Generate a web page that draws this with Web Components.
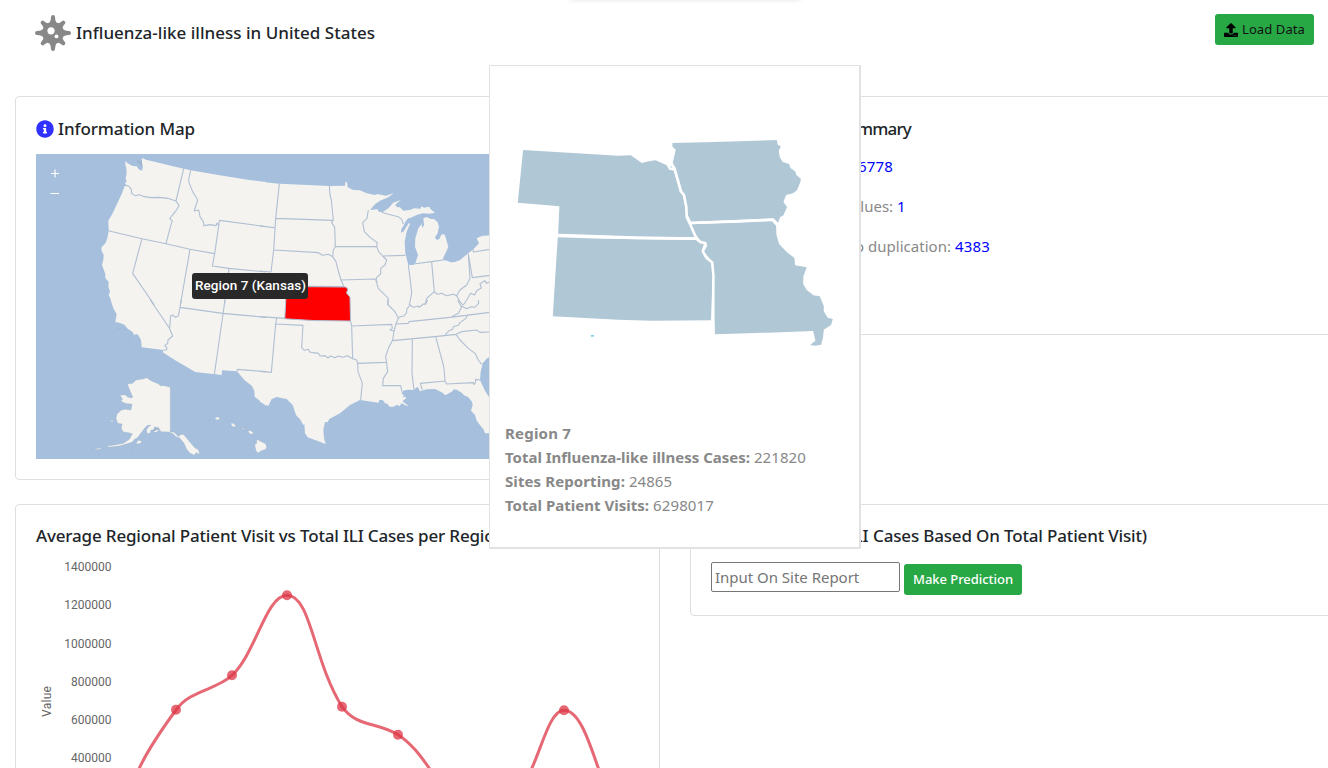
<!DOCTYPE html>
<html lang="en">
<head>
<meta charset="utf-8">
<title>Influenza-like illness in United States</title>
<style>
html,body{margin:0;height:768px;overflow:hidden;background:#fff}
body{font-family:"Noto Sans","Open Sans",sans-serif;font-size:15px;line-height:24px;color:#888;position:relative}
</style>
</head>
<body>
<ili-dashboard></ili-dashboard>
<script>
function define(name, html, setup) {
  const tpl = document.createElement('template');
  tpl.innerHTML = html.trim();
  customElements.define(name, class extends HTMLElement {
    constructor() {
      super();
      this.attachShadow({ mode: 'open' }).append(tpl.content.cloneNode(true));
    }
    connectedCallback() { if (setup) setup(this); }
  });
}

// Text run with tracking adjusted to the width given in "w".
define('fit-text', `<style>:host{display:inline-block;white-space:pre}</style><slot></slot>`, el => {
  const w = parseFloat(el.getAttribute('w'));
  if (!w) return;
  const n = el.textContent.length;
  el.style.letterSpacing = ((w - el.getBoundingClientRect().width) / n) + 'px';
});

define('virus-icon', `
<style>:host{display:block;width:36px;height:36px}svg{display:block}</style>
<svg width="36" height="36" viewBox="-18 -18 36 36" fill="#888">
<defs><path id="s" d="M-5.5-8Q-2.2-10.5-2-16A2 2 0 0 1 2-16Q2.2-10.5 5.5-8Z"/></defs>
<circle r="10.9"/>
<use href="#s"/><use href="#s" transform="rotate(45) scale(1 .92)"/><use href="#s" transform="rotate(90)"/><use href="#s" transform="rotate(135) scale(1 .92)"/>
<use href="#s" transform="rotate(180)"/><use href="#s" transform="rotate(225) scale(1 .92)"/><use href="#s" transform="rotate(270)"/><use href="#s" transform="rotate(315) scale(1 .92)"/>
<circle cx="-2" cy="-2.200" r="3.600" fill="#fff"/><circle cx="3.500" cy="3.400" r="1.900" fill="#fff"/>
</svg>`);

define('info-icon', `
<style>:host{display:block;width:18px;height:18px}svg{display:block}</style>
<svg width="18" height="18" viewBox="0 0 512 512"><path fill="#3030ff" d="M256 8C119 8 8 119 8 256s111 248 248 248 248-111 248-248S393 8 256 8zm0 110c23.200 0 42 18.800 42 42s-18.800 42-42 42-42-18.800-42-42 18.800-42 42-42zm56 254c0 6.600-5.400 12-12 12h-88c-6.600 0-12-5.400-12-12v-24c0-6.600 5.400-12 12-12h12v-64h-12c-6.600 0-12-5.400-12-12v-24c0-6.600 5.400-12 12-12h64c6.600 0 12 5.400 12 12v100h12c6.600 0 12 5.400 12 12v24z"/></svg>`);

define('upload-icon', `
<style>:host{display:block;width:14px;height:14px}svg{display:block}</style>
<svg width="14" height="14" viewBox="0 0 512 512"><path d="M296 384h-80c-13.300 0-24-10.700-24-24V192h-87.700c-17.800 0-26.700-21.500-14.100-34.100L242.300 5.700c7.500-7.500 19.800-7.500 27.300 0l152.200 152.200c12.600 12.600 3.700 34.100-14.100 34.100H320v168c0 13.300-10.700 24-24 24zm216-8v112c0 13.300-10.700 24-24 24H24c-13.300 0-24-10.700-24-24V376c0-13.300 10.700-24 24-24h136v8c0 30.900 25.100 56 56 56h80c30.900 0 56-25.100 56-56v-8h136c13.300 0 24 10.700 24 24zm-124 88c0-11-9-20-20-20s-20 9-20 20 9 20 20 20 20-9 20-20zm64 0c0-11-9-20-20-20s-20 9-20 20 9 20 20 20 20-9 20-20z"/></svg>`);

define('ui-button', `
<style>
:host{display:block}
button{box-sizing:border-box;height:31px;padding:0 9px;border:0;border-radius:3px;background:#28a745;display:flex;align-items:center;gap:4px;font:13px/21px "Noto Sans",sans-serif;font-weight:inherit;color:inherit}
</style><button><slot></slot></button>`);

define('ui-card', `
<style>
:host{display:block;box-sizing:border-box;border:1px solid #dfdfdf;border-radius:4px;background:#fff;padding:19px 20px}
.t{display:flex;align-items:center;gap:4px;height:24px;font-size:17px;font-weight:500;color:#212529}
</style><div class="t"><slot name="title"></slot></div><slot></slot>`);

define('us-map', `
<style>
:host{display:block;position:relative;height:305px;overflow:hidden;background:#a5bfdd}
svg{display:block}
.ctl{position:absolute;left:14px;top:14px;width:10px}
.tip{position:absolute;left:156px;top:119px;width:116px;height:26px;box-sizing:border-box;padding-left:3px;border-radius:3px;background:#292929;color:#fff;font:500 13.5px/25px Roboto,sans-serif}
.land path{fill:#f4f3f0}
.line path{fill:none;stroke:#b0bfd2;stroke-width:3.3;stroke-linejoin:round}
.isle path{fill:#f4f3f0;stroke:#9cacc2;stroke-width:1}
</style>
<svg width="604" height="305" viewBox="36 154 604 305">
<g class="land">
<g transform="translate(36 150) scale(.33333)"><path d="M318 24L330 29 443 56 464 61 560 77 640 90 690 96V465H229L225 450 218 435 222 425 217 410 218 395 208 385 208 372 198 345 202 330 203 315 196 300 197 292 208 280 214 265 218 242 217 212 230 190 244 160 258 130 266 108 272 105 266 100 272 95 269 85 272 70 271 55 268 45 268 33 275 40 290 48 302 49 308 58 318 62 321 50 316 38Z"/></g>
<g transform="translate(260 150) scale(.33333)"><path d="M0 95L58 101 208 108 255 107 256 96 261 97 263 112 280 120 300 121 320 130 345 135 352 132 378 137 402 129 385 142 360 152 345 163 330 180 352 178 356 185 368 186 385 175 400 158 422 150 405 165 412 172 420 172 430 182 450 180 462 175 482 176 484 169 492 173 508 170 512 178 525 188 508 191 488 190 470 195 452 203 445 205 438 212 430 228 424 238 423 248 430 245 447 218 450 222 440 245 434 275 436 310 445 345 458 345 466 340 468 334 474 315 465 290 466 265 475 235 485 222 487 234 492 226 490 205 500 201 512 207 522 207 533 217 537 230 533 250 525 262 530 270 538 267 544 254 552 252 557 262 565 290 560 302 552 318 548 330 562 332 572 337 585 336 600 330 625 310 640 298 657 280 650 265 665 258 690 256V465H0Z"/></g>
<g transform="translate(36 300) scale(.33333)">
<path d="M224-2L232 25 242 42 238 66 250 68 265 74 275 86 290 96 293 104 305 103 315 120 317 142 382 150 380 157 420 182 478 216 557 225 558 211 603 214 625 240 648 258 655 272 656 290 690 317V-2Z"/></g>
<g transform="translate(260 300) scale(.33333)"><path d="M0 305L25 318 35 297 50 291 80 297 98 315 108 345 120 358 130 375 133 372 135 400 143 412 165 420 197 432 192 415 190 390 195 366 203 367 208 357 240 340 270 315 300 300 340 306 356 308 358 300 368 300 375 310 383 312 388 320 400 320 412 314 418 319 425 310 436 316 447 318 430 307 428 302 437 296 438 290 428 292 432 285 424 281 430 272 442 269 462 270 470 262 474 262 480 274 500 268 525 267 548 278 556 286 575 275 582 268 590 269 605 278 612 286 625 292 636 305 638 315 633 332 645 345 650 362 665 382 670 387 675 400 690 400V296L675 272 660 240 662 215 668 190 680 176 690 170V-2H0Z"/></g>
</g>
<g class="line">
<g transform="translate(36 150) scale(.33333)">
<path d="M266 106L278 108 286 118 287 130 297 137 310 134 325 140 345 143 370 142 395 145 420 153 443 56M420 153L429 167 418 185 401 206 409 212 402 235 390 281M464 61L458 90 459 98 470 125 485 150 480 165 475 183 488 180 492 200 503 217 503 227 522 224 540 227 543 220 547 224 551 211 690 230M549 222L536 311 529 348 579 355 690 366M217 242L318 266 390 281 462 298 536 311M318 266L290 370 355 465M462 298L433 465M579 355L565 465"/></g>
<g transform="translate(260 150) scale(.33333)">
<path d="M58 101L47 205 41 300 33 366M208 108L210 135 214 150 220 210 215 218 224 232 226 290 352 290M47 205L220 211M41 300L175 308 188 316 205 313 218 320 220 300 226 290M0 228L43 233M0 363L33 366M218 320L228 335 234 360 243 390 252 410 145 409M243 390L345 387 352 396M325 180L321 205 308 218 313 245 330 262 352 278 350 290 356 305 368 318 380 330 375 345 362 355 362 372 350 382 348 392 355 415 370 430 385 445 383 465M368 318L436 316M365 187L385 193 415 200 425 208 430 222M445 345L452 400 455 430 448 465M460 342L515 335 550 330M515 337L523 425M495 465L500 445 523 425 532 433 545 430 560 437 580 433 590 437 600 420 620 405 630 385 625 312M590 437L600 455 608 465M640 298V306L690 298M625 312L637 383 690 376M690 395L680 400 674 392 660 402 664 414 650 422 644 435 632 430 622 447 610 465"/></g>
<g transform="translate(36 300) scale(.33333)">
<path d="M343 0L400 84 410 108 396 120 395 130 386 137 393 143 391 150 382 150M436 0L432 22 427 48 418 52 410 45 404 47 401 84M432 22L560 40 690 52M567 0L535 224M603 214L604 208 690 215"/></g>
<g transform="translate(260 300) scale(.33333)">
<path d="M0 50L75 55M50 56L47 72 34 217 0 214M47 72L129 76 125 143 133 151 145 148 149 156 160 158 175 160 180 168 195 167 204 174 212 168 225 173 235 168 250 172 262 167 278 176 290 180 293 190 294 215 307 250 302 300M271 62L275 78 278 178M275 78L395 73 397 85 390 90 402 93M293 190L378 187M382 0L385 15 405 35 415 55 408 72 402 93 398 120 385 145 377 170 380 190 383 215 370 235 368 257 422 257 426 275M457 117L456 220 462 270M398 122L525 110 588 103M527 110L550 195 553 215 555 243 560 252 640 248 642 254 646 248 647 238 660 240M555 243L481 250 487 270M588 103L600 120 625 145 645 160 655 180 665 193M408 72L445 70 447 65 570 52 690 37M623 43L618 55 600 68 595 76 580 80 578 88 566 93 556 104M588 103L605 95 650 90 660 97 690 96M415 55L418 51 432 48 440 38 440 28 450 15 460 22 475 18 478 22 490 12 497 12 503 0M575 50L595 40 605 22 593 0M605 18L620 26 634 20 644 22 656 10 655 0"/></g>
</g>
<path fill="#f00" stroke="#b0bfd2" d="M286.500 286.500L345.500 287 348 289 346.500 293 350 297 350.500 321 313 320.500 284.800 318.800Z"/>
<g class="isle" transform="translate(36 300) scale(.33333)">
<path d="M274 252L290 250 300 240 320 237 332 233 345 242 368 252 373 257 385 257 403 262V395L414 397 428 410 432 404 442 403 455 418 465 430 475 442 488 450 491 463 480 458 475 466 462 460 452 448 444 430 432 415 420 410 412 402 400 396 375 395 368 384 356 380 352 390 345 390 343 398 335 402 331 392 336 382 345 376 335 376 328 382 322 390 312 403 306 412 296 418 288 427 268 433 250 438 215 442 215 438 240 434 262 430 280 418 289 401 278 398 262 396 256 386 258 372 245 370 240 355 243 342 256 330 268 328 285 330 288 312 272 311 258 306 255 300 260 298 252 286 268 284 274 291 288 294 290 290 283 275Z"/>
<path d="M302 427L307 421 318 423 314 430 302 433ZM224 360L232 362 230 366 224 364ZM215 303L227 314 224 313ZM160 452L174 448M176 447L196 443 195 447 180 449ZM312 417L320 415M350 396L362 388 370 390 360 397ZM288 440L289 452"/>
<path d="M537 353L548 350 551 357 545 360 538 358ZM517 363L525 357M585 369L592 370 601 379 592 381 586 376ZM614 384L632 386 620 388ZM636 394L642 391 655 400 642 403ZM623 396H629M656 434L662 430 662 418 672 423 690 432V448L676 452 666 459 660 452ZM243 85L258 86M262 87L275 89M282 117L288 118M279 125L288 137"/>
</g>
<path fill="#f4f3f0" d="M259 441.500L264 444 267 447 262 450 259 451Z"/>
<path fill="none" stroke="#8fa3bd" stroke-width=".8" d="M139 162l2 3M137 161l2 1M141 160l1 5M153 431l6-3"/>
</svg>
<svg class="ctl" width="10" height="28" viewBox="0 0 10 28"><path d="M1 5.500H9M5 1.500V9.500M.5 25.500H9" fill="none" stroke="#fff" stroke-width="1.200"/></svg>
<div class="tip"><fit-text w="111">Region 7 (Kansas)</fit-text></div>`);

define('region-map', `
<style>:host{display:block}svg{display:block}</style>
<svg width="369" height="300" viewBox="14.700 16 1107 900" fill="#b0c7d5">
<path d="M114 268L300 279 400 285 437 284 470 307 495 301 512 299 545 314 552 327 566 330 584 394 593 404 600 440 603 470 613 492 630 530 450 527 219 519 223 437 98 426Z"/>
<path d="M218 530L350 534 632 538 643 547 658 550 650 572 660 590 679 605 683 645 678 779 500 780 400 777 203 767Z"/>
<path d="M562 247L660 245 875 238 878 252 887 257 881 271 884 290 893 304 912 310 916 322 930 332 934 343 947 354 946 364 936 388 924 398 903 403 895 424 906 439 895 464 885 470 879 486 865 473 750 478 618 483 607 460 605 435 598 403 590 390 570 320 563 306 572 267 562 258Z"/>
<path d="M620 491L760 486 860 481 873 495 874 522 882 550 905 574 928 592 930 614 965 620 955 646 954 670 965 688 985 704 1004 707 1016 736 1016 752 1028 771 1043 775 1038 793 1016 807 1014 830 1008 852 990 855 975 853 991 840 984 811 850 816 689 821 687 640 684 606 670 590 656 573 666 557 663 544 645 540 622 505Z"/>
<path fill="none" stroke="#fff" stroke-width="7.500" stroke-linejoin="round" d="M555 322L568 322 588 392 597 404 604 440 605 470 614 488 632 530 646 544 661 548 653 572 664 592 681 605 685 645 683 779 685 820M219 524L450 532 634 534M614 487L750 482 863 477 876 491"/>
<path d="M317 823h10v5h-10z" fill="#82d0e4"/><circle cx="558" cy="319" r="3" fill="#c6e4ec"/>
</svg>`);

define('region-popup', `
<style>
:host{display:block;position:absolute;left:489px;top:65px;width:372px;height:484px;box-sizing:border-box;background:#fff;border:1px solid #e2e2e2;border-right-width:2px;border-bottom-width:2px;border-radius:1px}
.info{padding:55px 15px 0;font-size:15px;line-height:24px;color:#888}
.info div{height:24px;white-space:nowrap}b{font-weight:700}
</style>
<region-map></region-map>
<div class="info">
<div><b><fit-text w="66">Region 7</fit-text></b></div>
<div><b><fit-text w="245">Total Influenza-like illness Cases:</fit-text></b><fit-text w="56"> 221820</fit-text></div>
<div><b><fit-text w="120">Sites Reporting:</fit-text></b><fit-text w="47"> 24865</fit-text></div>
<div><b><fit-text w="144">Total Patient Visits:</fit-text></b><fit-text w="65"> 6298017</fit-text></div>
</div>`);

define('line-chart', `
<style>:host{display:block}svg{display:block}text{font:12px Roboto,sans-serif;fill:#666}</style>
<svg width="604" height="300" viewBox="36 550 604 300">
<g text-anchor="end"><text x="111.500" y="571">1400000</text><text x="111.500" y="609">1200000</text><text x="111.500" y="648">1000000</text><text x="111.500" y="686">800000</text><text x="111.500" y="724">600000</text><text x="111.500" y="762">400000</text></g>
<text transform="translate(51 717) rotate(-90)" textLength="31">Value</text>
<g fill="none" stroke="#dc3545" stroke-opacity=".75" stroke-width="3">
<path d="M138.500 770C147 751 165 725 176 710C190 690 217 690 232 675.300C256 653 266 595.300 287 595.300C311 595.300 313 660 342 706.700C356 727 378 722 398 734.700C411 743 420 755 430.500 770"/>
<path d="M531 770C542 747 550 710.300 564 710.300C580 710.300 590 745 599 770"/></g>
<g fill="#dc3545" fill-opacity=".75"><circle cx="176" cy="709.800" r="5"/><circle cx="232" cy="675.300" r="5"/><circle cx="287" cy="595.200" r="5"/><circle cx="342" cy="706.700" r="5"/><circle cx="398" cy="734.700" r="5"/><circle cx="564" cy="710.300" r="5"/></g>
</svg>`);

define('ili-dashboard', `
<style>
:host{display:block;position:relative;height:768px;overflow:hidden;background:#fff}
header{height:96px;box-sizing:border-box;padding:14px 14px 0 35px;display:flex;justify-content:space-between;align-items:flex-start}
.brand{display:flex;align-items:center;gap:5px;height:37px;font-size:17px;font-weight:500;color:#212529}
.grid{display:grid;grid-template-columns:645px 668px;column-gap:30px;padding-left:15px;align-items:start}
.top{height:408px}
us-map{margin-top:13px;margin-bottom:1px}
.map{height:384px;padding-top:20px}.sum{height:239px;padding-top:20px}.chart{height:420px}.pred{height:112px}
.row{display:flex;justify-content:flex-end;height:24px;margin-top:16px;white-space:pre}
.row.first{margin-top:13px}
.row fit-text+fit-text{color:#00f}
.form{display:flex;gap:4px;margin-top:14px}
input{box-sizing:border-box;width:189px;height:30px;border:1px solid #767676;border-radius:2px;padding:0 3px;font:15px "Noto Sans",sans-serif;letter-spacing:-.02px}
input::placeholder{color:#757575}
.form ui-button{margin-top:2px;color:#fff;font-weight:500}
.glow{position:absolute;left:570px;top:-6px;width:230px;height:4px;box-shadow:0 2px 5px rgba(0,0,0,.12)}
line-chart{margin-top:2px}
</style>
<header>
<div class="brand"><virus-icon></virus-icon><fit-text w="299">Influenza-like illness in United States</fit-text></div>
<ui-button style="color:#111"><upload-icon></upload-icon><fit-text w="63">Load Data</fit-text></ui-button>
</header>
<div class="grid top">
<ui-card class="map"><info-icon slot="title"></info-icon><fit-text slot="title" w="137">Information Map</fit-text><us-map></us-map></ui-card>
<ui-card class="sum">
<div slot="title" class="row" style="width:200px;margin:0"><span>Data Su</span><fit-text w="54">mmary</fit-text></div>
<div class="row first" style="width:182px"><fit-text>Total rows: </fit-text><fit-text w="35">6778</fit-text></div>
<div class="row" style="width:195px"><fit-text>Missing values: </fit-text><fit-text w="9">1</fit-text></div>
<div class="row" style="width:279px"><fit-text>Rows with no</fit-text><fit-text w="91" style="color:#888"> duplication: </fit-text><fit-text w="35">4383</fit-text></div>
</ui-card>
</div>
<div class="grid">
<ui-card class="chart"><fit-text slot="title" w="469">Average Regional Patient Visit vs Total ILI Cases per Region</fit-text><line-chart></line-chart></ui-card>
<ui-card class="pred">
<div slot="title" class="row" style="width:436px;margin:0"><span>Predict Value (ILI </span><fit-text w="274">Cases Based On Total Patient Visit)</fit-text></div>
<div class="form"><input placeholder="Input On Site Report"><ui-button><fit-text w="100">Make Prediction</fit-text></ui-button></div>
</ui-card>
</div>
<div class="glow"></div>
<region-popup></region-popup>`);
</script>
</body>
</html>
